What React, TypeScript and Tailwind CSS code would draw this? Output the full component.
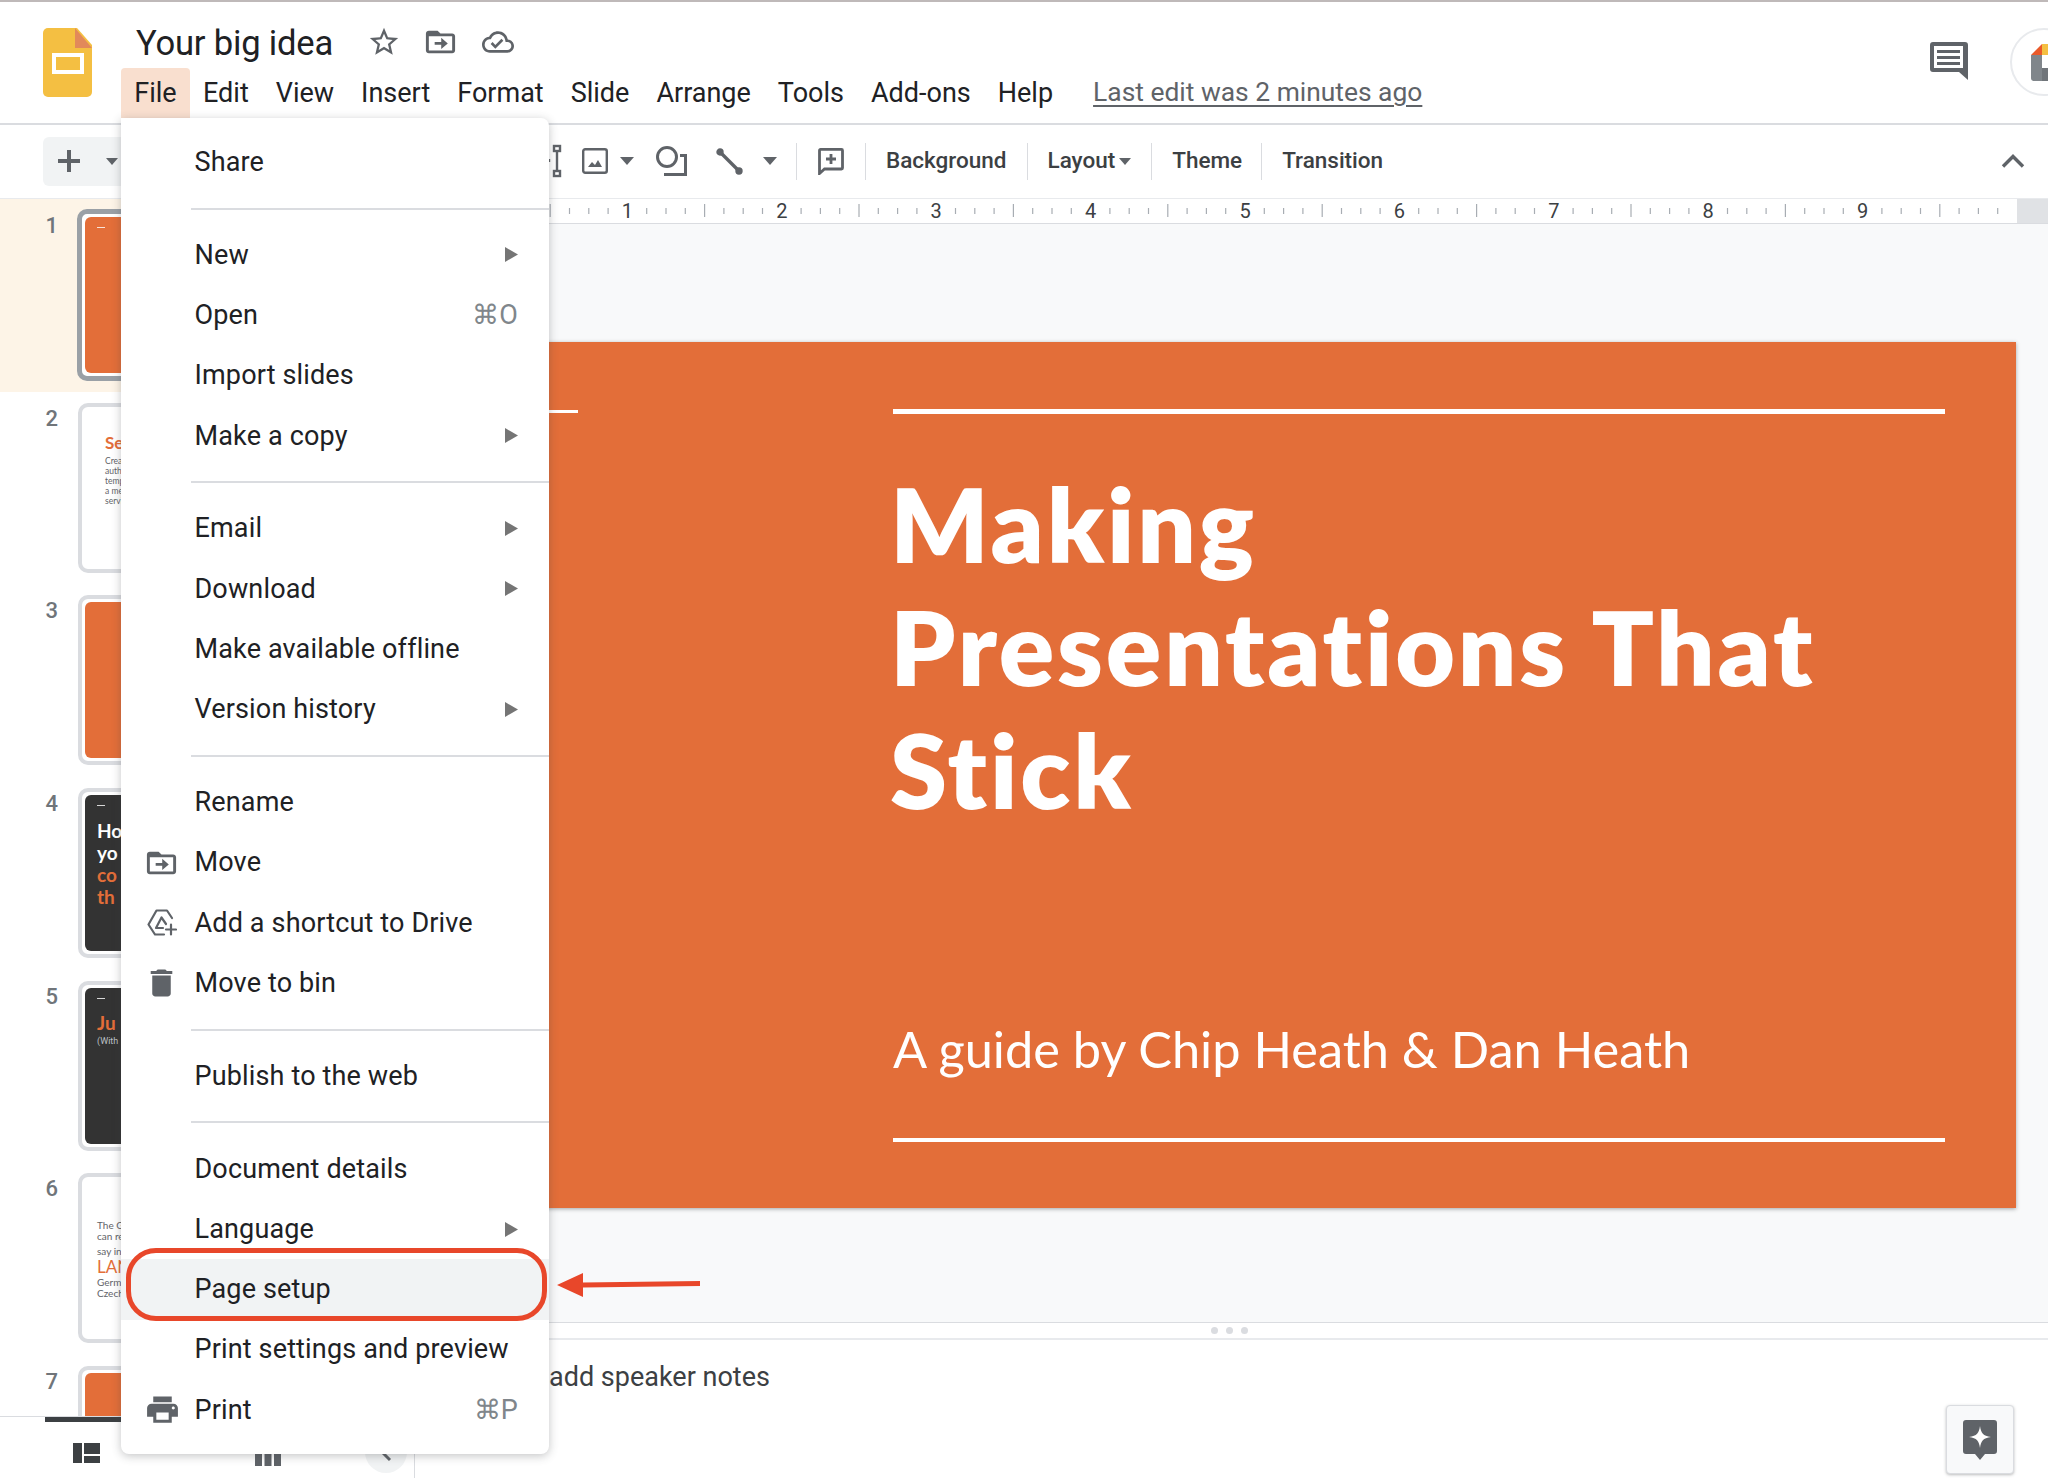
import React from "react";

const menuTabs = ["Edit", "View", "Insert", "Format", "Slide", "Arrange", "Tools", "Add-ons", "Help"];

type MenuRow = { label?: string; arrow?: boolean; shortcut?: string; icon?: React.ReactNode; hover?: boolean; divider?: boolean };

const G = ({ className, d }: { className?: string; d: string }) => (
  <svg className={className} viewBox="0 0 24 24" fill="currentColor" preserveAspectRatio="none">
    <path d={d} />
  </svg>
);

const FOLDER_MOVE = "M20 6h-8l-2-2H4c-1.100 0-2 .9-2 2v12c0 1.100.9 2 2 2h16c1.100 0 2-.9 2-2V8c0-1.100-.9-2-2-2zm0 12H4V8h16v10zM12.500 17l4.500-4-4.500-4v3H8v2h4.500v3z";
const PRINTER = "M19 8H5c-1.660 0-3 1.340-3 3v6h4v4h12v-4h4v-6c0-1.660-1.340-3-3-3zm-3 11H8v-5h8v5zm3-7c-.55 0-1-.45-1-1s.45-1 1-1 1 .45 1 1-.45 1-1 1zm-1-9H6v4h12V3z";
const BIN = "M6 19c0 1.100.9 2 2 2h8c1.100 0 2-.9 2-2V7H6v12zM19 4h-3.500l-1-1h-5l-1 1H5v2h14V4z";
const STAR = "M22 9.240l-7.190-.62L12 2 9.190 8.630 2 9.240l5.460 4.730L5.820 21 12 17.270 18.180 21l-1.630-7.030L22 9.240zM12 15.400l-3.760 2.270 1-4.280-3.320-2.880 4.380-.38L12 6.100l1.710 4.040 4.380.38-3.320 2.880 1 4.280L12 15.400z";
const CLOUD = "M19.350 10.040C18.670 6.590 15.640 4 12 4 9.110 4 6.600 5.640 5.350 8.040 2.340 8.360 0 10.910 0 14c0 3.310 2.690 6 6 6h13c2.760 0 5-2.240 5-5 0-2.640-2.050-4.780-4.650-4.960zM19 18H6c-2.210 0-4-1.790-4-4 0-2.050 1.530-3.760 3.560-3.970l1.070-.11.5-.95C8.080 7.140 9.940 6 12 6c2.620 0 4.880 1.860 5.390 4.430l.3 1.500 1.530.11c1.560.1 2.780 1.410 2.780 2.960 0 1.650-1.350 3-3 3zm-9-3.820l-2.090-2.090L6.500 13.500 10 17l6.010-6.010-1.410-1.410z";

const DriveAdd = () => (
  <svg className="w-[30px] h-[27px] text-[#5f6368]" viewBox="0 0 30 27" fill="none" stroke="currentColor" strokeWidth="2.2" strokeLinejoin="round" strokeLinecap="round">
    <path d="M25 9L20 1.500H9.500L1.500 15.500 8 25.500h9" />
    <path d="M19 15L14.500 8.500 9 19h7" />
    <path d="M24 15.500v10M19 20.500h10" />
  </svg>
);

const rows: MenuRow[] = [
  { label: "Share" },
  { divider: true },
  { label: "New", arrow: true },
  { label: "Open", shortcut: "⌘O" },
  { label: "Import slides" },
  { label: "Make a copy", arrow: true },
  { divider: true },
  { label: "Email", arrow: true },
  { label: "Download", arrow: true },
  { label: "Make available offline" },
  { label: "Version history", arrow: true },
  { divider: true },
  { label: "Rename" },
  { label: "Move", icon: <G className="w-[35px] h-[34px] -ml-[3px] text-[#5f6368]" d={FOLDER_MOVE} /> },
  { label: "Add a shortcut to Drive", icon: <DriveAdd /> },
  { label: "Move to bin", icon: <G className="w-[37px] h-[36px] -ml-[4px] shrink-0 text-[#5f6368]" d={BIN} /> },
  { divider: true },
  { label: "Publish to the web" },
  { divider: true },
  { label: "Document details" },
  { label: "Language", arrow: true },
  { label: "Page setup", hover: true },
  { label: "Print settings and preview" },
  { label: "Print", shortcut: "⌘P", icon: <G className="w-[37px] h-[35px] -ml-[3px] shrink-0 text-[#5f6368]" d={PRINTER} /> },
];

const Caret = ({ className }: { className?: string }) => (
  <svg className={className} viewBox="0 0 12 7" fill="currentColor" preserveAspectRatio="none">
    <path d="M0 0h12L6 7z" />
  </svg>
);

const Sep = () => <div className="w-px h-[37px] bg-[#dadce0]" />;

function Thumb({ n, selected, children, dark, orange }: { n: number; selected?: boolean; children?: React.ReactNode; dark?: boolean; orange?: boolean }) {
  return (
    <div className={`flex items-center h-[192.6px] shrink-0 ${selected ? "bg-[#fdf4e7]" : ""}`}>
      <div className="w-[77px] shrink-0 -mt-[139px] pr-[19px] text-right text-[22px] font-medium text-[#70757a]">{n}</div>
      <div className={`w-[300px] bg-white rounded-[10px] ${selected ? "h-[172px] border-[5px] border-[#9aa0a6] p-[3px]" : "h-[170px] ml-[1px] border-[4px] border-[#dadce0] p-[3px]"}`}>
        <div className={`relative h-full rounded-[6px] overflow-hidden pl-[12px] ${orange ? "bg-[#e36e39]" : dark ? "bg-[#333333]" : "bg-white"}`}>{children}</div>
      </div>
    </div>
  );
}

export default function App() {
  const inches = [1, 2, 3, 4, 5, 6, 7, 8, 9];
  const ticks: { x: number; long: boolean }[] = [];
  for (let i = 0; i < 80; i++) {
    if (i % 8 === 0) continue;
    ticks.push({ x: i * 19.3, long: i % 4 === 0 });
  }

  return (
    <div className="relative w-[2048px] h-[1478px] overflow-hidden bg-white flex flex-col font-[Roboto,sans-serif] text-[#202124]">
      {/* header */}
      <header className="flex h-[125px] shrink-0 border-t-2 border-b-2 border-t-[#bfb9b9] border-b-[#dadce0] overflow-hidden">
        <svg className="w-[49px] h-[69px] ml-[43px] mt-[26px] shrink-0" viewBox="0 0 49 69">
          <path d="M5 0h29l15 17v47a5 5 0 0 1-5 5H5a5 5 0 0 1-5-5V5a5 5 0 0 1 5-5z" fill="#f4bf42" />
          <path d="M32 0l17 20H32z" fill="#e2895a" />
          <rect x="11" y="27" width="28" height="17" fill="none" stroke="#fff" strokeWidth="4" />
        </svg>
        <div className="ml-[29px] flex flex-col">
          <div className="flex items-center h-[66px] pl-[15px] pt-[14px]">
            <span className="pt-[2px] text-[34.600px] leading-none tracking-[-0.2px] text-[#202124]">Your big idea</span>
            <G className="w-[34px] h-[34px] ml-[34px] text-[#5f6368]" d={STAR} />
            <G className="w-[35px] h-[34px] ml-[22px] text-[#5f6368]" d={FOLDER_MOVE} />
            <G className="w-[32px] h-[32px] ml-[24px] text-[#5f6368]" d={CLOUD} />
          </div>
          <nav className="flex items-center h-[50px] text-[27px]">
            <span className="h-[50px] w-[69px] flex items-center justify-center bg-[#f9dfcf] rounded-t-[4px]">File</span>
            <div className="flex items-center gap-[27px] ml-[13px]">
              {menuTabs.map((t) => (
                <span key={t}>{t}</span>
              ))}
            </div>
            <span className="ml-[40px] text-[26.400px] text-[#5f6368] underline underline-offset-4">Last edit was 2 minutes ago</span>
          </nav>
        </div>
        <div className="ml-auto flex items-start shrink-0">
          <svg className="w-[38px] h-[38px] mt-[40px]" viewBox="0 0 38 38" fill="#5f6368">
            <path fillRule="evenodd" d="M3 0h32a3 3 0 0 1 3 3v35l-9-8H3a3 3 0 0 1-3-3V3a3 3 0 0 1 3-3zm1 4v22h29V4zM7 8h23v3H7zm0 6h23v3H7zm0 6h23v3H7z" />
          </svg>
          <div className="w-[68px] h-[68px] ml-[42px] mt-[26px] shrink-0 rounded-full border-2 border-[#e8eaed] pl-[19px] pt-[14px] -mr-[30px]">
            <svg className="w-[30px] h-[38px]" viewBox="0 0 30 38">
              <path d="M11 0h19v11H11z" fill="#f4bf42" />
              <path d="M0 11L11 0v11z" fill="#ea5a2a" />
              <path d="M0 11h11v26H3a3 3 0 0 1-3-3z" fill="#80868b" />
              <rect x="11" y="11" width="19" height="13" fill="#fff" />
              <rect x="11" y="24" width="19" height="13" fill="#70757a" />
            </svg>
          </div>
        </div>
      </header>

      {/* toolbar */}
      <div className="flex items-center h-[73px] shrink-0 pl-[43px] pb-[1px] text-[22.500px] font-medium text-[#3c4043]">
        <div className="flex items-center w-[78px] h-[49px] bg-[#f1f3f4] rounded-l-[6px] shrink-0">
          <svg className="w-[22px] h-[22px] ml-[15px] text-[#5f6368]" viewBox="0 0 22 22" fill="currentColor">
            <path d="M9 0h4v9h9v4h-9v9H9v-9H0V9h9z" />
          </svg>
          <Caret className="w-[12px] h-[7px] ml-[26px] shrink-0 text-[#5f6368]" />
        </div>
        <svg className="w-[13px] h-[34px] ml-[428px] shrink-0 text-[#5f6368]" viewBox="0 0 13 34" fill="none" stroke="currentColor" strokeWidth="2.4">
          <path d="M8 6v22" />
          <rect x="5" y="2" width="6" height="5" />
          <rect x="5" y="27" width="6" height="5" />
          <path d="M0 15v3" />
        </svg>
        <svg className="w-[26px] h-[26px] ml-[20px] shrink-0 text-[#5f6368]" viewBox="0 0 26 26" fill="none" stroke="currentColor" strokeWidth="2.400">
          <rect x="1.200" y="1.200" width="23.600" height="23.600" rx="2" />
          <path d="M6 19l4-5 3 3 3-5 4 7z" fill="currentColor" stroke="none" />
        </svg>
        <Caret className="w-[14px] h-[8px] ml-[12px] shrink-0 text-[#5f6368]" />
        <svg className="w-[31px] h-[30px] ml-[22px] shrink-0 text-[#5f6368]" viewBox="0 0 31 30" fill="none" stroke="currentColor" strokeWidth="3">
          <circle cx="11" cy="11" r="9.500" />
          <path d="M24 9.500h5.500v19H8" />
        </svg>
        <svg className="w-[27px] h-[27px] ml-[29px] shrink-0 text-[#5f6368]" viewBox="0 0 27 27" fill="none" stroke="currentColor" strokeWidth="3.400">
          <path d="M4 4l19 19" />
          <circle cx="4" cy="4" r="2" fill="currentColor" />
          <circle cx="23" cy="23" r="2" fill="currentColor" />
        </svg>
        <Caret className="w-[14px] h-[8px] ml-[20px] shrink-0 text-[#5f6368]" />
        <div className="ml-[19px]">
          <Sep />
        </div>
        <svg className="w-[26px] h-[27px] ml-[21px] shrink-0 text-[#5f6368]" viewBox="0 0 26 27" fill="none" stroke="currentColor" strokeWidth="2.800">
          <path d="M2.500 1.400h21a1 1 0 0 1 1 1V20a1 1 0 0 1-1 1H6.500l-5 4.500V2.400a1 1 0 0 1 1-1z" />
          <path d="M13 6v10M8 11h10" />
        </svg>
        <div className="ml-[21px]">
          <Sep />
        </div>
        <span className="ml-[20px]">Background</span>
        <div className="ml-[20px]">
          <Sep />
        </div>
        <span className="ml-[20px]">Layout</span>
        <Caret className="w-[12px] h-[7px] ml-[4px] shrink-0 text-[#5f6368]" />
        <div className="ml-[20px]">
          <Sep />
        </div>
        <span className="ml-[20px]">Theme</span>
        <div className="ml-[19px]">
          <Sep />
        </div>
        <span className="ml-[20px]">Transition</span>
        <svg className="w-[24px] h-[14px] ml-auto mr-[23px] text-[#5f6368]" viewBox="0 0 24 14" fill="none" stroke="currentColor" strokeWidth="3.400">
          <path d="M2 12.500L12 2.500l10 10" />
        </svg>
      </div>

      {/* body */}
      <div className="flex flex-1 min-h-0 border-t border-[#e8eaed]">
        {/* filmstrip */}
        <aside className="w-[415px] shrink-0 flex flex-col border-r border-[#dadce0]">
          <div className="flex-1 min-h-0 flex flex-col overflow-hidden border-b border-[#dadce0]">
            <Thumb n={1} selected orange>
              <div className="mt-[10px] w-[8px] h-px bg-white/80" />
            </Thumb>
            <Thumb n={2}>
              <div className="pt-[24px] ml-[8px] text-[#5f6368] text-[8.500px] leading-[10px] font-[Lato,sans-serif]">
                <div className="text-[17px] leading-[18px] font-bold text-[#e36e39]">Se</div>
                <div className="mt-[4px]">Creat</div>
                <div>autho</div>
                <div>temp</div>
                <div>a mer</div>
                <div>servic</div>
              </div>
            </Thumb>
            <Thumb n={3} orange />
            <Thumb n={4} dark>
              <div className="mt-[10px] w-[8px] h-px bg-white/80" />
              <div className="mt-[14px] text-[19px] leading-[22px] font-bold text-white font-[Lato,sans-serif]">
                <div>Ho</div>
                <div>yo</div>
                <div className="text-[#e36e39]">co</div>
                <div className="text-[#e36e39]">th</div>
              </div>
            </Thumb>
            <Thumb n={5} dark>
              <div className="mt-[10px] w-[8px] h-px bg-white/80" />
              <div className="mt-[13px] text-[19px] leading-[22px] font-bold text-[#e36e39] font-[Lato,sans-serif]">Ju</div>
              <div className="text-[9px] leading-[11px] text-[#bdc1c6] mt-[2px]">(With</div>
            </Thumb>
            <Thumb n={6}>
              <div className="pt-[40px] text-[#5f6368] text-[10px] leading-[11px] font-[Lato,sans-serif]">
                <div>The G</div>
                <div>can re</div>
                <div className="mt-[4px]">say in</div>
                <div className="text-[17px] leading-[18px] my-[1px] text-[#e36e39]">LAN</div>
                <div>Germ</div>
                <div>Czech</div>
              </div>
            </Thumb>
            <Thumb n={7} orange />
          </div>
          <div className="h-[5px] ml-[45px] mr-[100px] bg-[#3c4043] shrink-0" />
          <div className="flex items-start h-[56px] shrink-0 pl-[73px]">
            <svg className="w-[27px] h-[20px] mt-[21px] shrink-0" viewBox="0 0 27 20" fill="#3c4043">
              <path d="M0 0h9v20H0zM11 0h16v11H11zM11 13h16v7H11z" />
            </svg>
            <svg className="w-[26px] h-[12px] ml-[155px] mt-[32px] shrink-0" viewBox="0 0 26 12" fill="#5f6368">
              <path d="M0 0h7v12H0zM9.500 0h7v12h-7zM19 0h7v12h-7z" />
            </svg>
            <div className="w-[42px] h-[42px] ml-[84px] mt-[9px] rounded-full bg-[#f1f3f4] flex items-center justify-center shrink-0">
              <svg className="w-[12px] h-[20px] text-[#5f6368]" viewBox="0 0 12 20" fill="none" stroke="currentColor" strokeWidth="3">
                <path d="M10 2l-8 8 8 8" />
              </svg>
            </div>
          </div>
        </aside>

        {/* editor */}
        <main className="flex-1 min-w-0 flex flex-col">
          <div className="h-[25px] shrink-0 bg-white border-b border-[#dadce0]">
            <svg className="block w-[1633px] h-[24px]" viewBox="0 0 1633 24">
              <rect x="1602" y="0" width="31" height="24" fill="#e0e2e5" />
              {ticks.map((t) => (
                <line key={t.x} x1={58 + t.x} x2={58 + t.x} y1={t.long ? 5 : 9} y2={t.long ? 18 : 15} stroke="#a8adb3" strokeWidth="1.2" />
              ))}
              {inches.map((n) => (
                <text key={n} x={58 + n * 154.4} y="19" textAnchor="middle" fontSize="20" fill="#3c4043" fontFamily="Roboto, sans-serif">
                  {n}
                </text>
              ))}
            </svg>
          </div>
          <div className="h-[1099px] shrink-0 bg-[#f8f9fa] border-b border-[#dadce0] pt-[118px] pl-[58px]">
            <div className="w-[1543px] h-[866px] bg-[#e36e39] shadow-[0_1px_4px_rgba(60,64,67,0.45)] text-white pt-[67px] font-[Lato,sans-serif]">
              <div className="flex">
                <div className="w-[35px] h-[3px] ml-[70px] mt-px bg-white" />
                <div className="w-[1052px] h-[5px] ml-[315px] bg-white" />
              </div>
              <div className="pl-[417px] pt-[48px] text-[103px] leading-[123px] tracking-[2.800px] font-extrabold">
                <div>Making</div>
                <div>Presentations That</div>
                <div>Stick</div>
              </div>
              <div className="pl-[420px] mt-[187px] text-[50.500px] leading-[62px]">A guide by Chip Heath &amp; Dan Heath</div>
              <div className="w-[1052px] h-[4px] ml-[420px] mt-[58px] bg-white" />
            </div>
          </div>
          <div className="h-[17px] shrink-0 border-b-2 border-[#e8eaed] flex items-center gap-[8px] pl-[796px]">
            <div className="w-[7px] h-[7px] rounded-full bg-[#dadce0]" />
            <div className="w-[7px] h-[7px] rounded-full bg-[#dadce0]" />
            <div className="w-[7px] h-[7px] rounded-full bg-[#dadce0]" />
          </div>
          <div className="flex-1 flex items-start justify-between pl-[134px] pr-[34px]">
            <span className="text-[27px] leading-[32px] mt-[21px] text-[#3c4043]">add speaker notes</span>
            <div className="w-[68px] h-[69px] mt-[65px] rounded-[4px] bg-[#f8f9fa] border border-[#dadce0] shadow-[0_1px_3px_rgba(60,64,67,0.35)] flex items-center justify-center shrink-0">
              <svg className="w-[34px] h-[40px]" viewBox="0 0 34 40">
                <path d="M3 0h28a3 3 0 0 1 3 3v28a3 3 0 0 1-3 3h-9l-5 6-5-6H3a3 3 0 0 1-3-3V3a3 3 0 0 1 3-3z" fill="#5f6368" />
                <path d="M17 6c1 7 3 10 11 11-8 1-10 4-11 11-1-7-3-10-11-11 8-1 10-4 11-11z" fill="#fff" />
              </svg>
            </div>
          </div>
        </main>
      </div>

      {/* file menu */}
      <div className="absolute left-[121px] top-[118px] w-[428px] bg-white rounded-b-[8px] rounded-tr-[8px] shadow-[0_2px_10px_rgba(60,64,67,0.3)] py-[14px] text-[27px] tracking-[0.15px]">
        {rows.map((r, i) =>
          r.divider ? (
            <div key={i} className="h-[32.500px] flex items-center pl-[70px]">
              <div className="w-full h-[2px] bg-[#dadce0]" />
            </div>
          ) : (
            <div key={i} className={`flex items-center h-[60.300px] pr-[31px] ${r.hover ? "bg-[#f1f3f4]" : ""}`}>
              <div className="w-[73.500px] pl-[26px] shrink-0 flex items-center">{r.icon}</div>
              <span>{r.label}</span>
              {r.arrow && (
                <svg className="w-[13px] h-[15px] ml-auto text-[#757575]" viewBox="0 0 13 15" fill="currentColor">
                  <path d="M0 0l13 7.500L0 15z" />
                </svg>
              )}
              {r.shortcut && <span className="ml-auto text-[#80868b]">{r.shortcut}</span>}
            </div>
          )
        )}
        <div className="absolute left-[5px] top-[1130px] w-[421px] h-[73px] rounded-[30px] border-[5px] border-[#e8472a]" />
      </div>

      {/* annotation arrow */}
      <svg className="absolute left-[557px] top-[1273px] w-[144px] h-[24px]" viewBox="0 0 144 24" fill="#e8472a">
        <path d="M0 12L26 0v9.500l117-1.500v5l-117 1.500V24z" />
      </svg>
    </div>
  );
}
